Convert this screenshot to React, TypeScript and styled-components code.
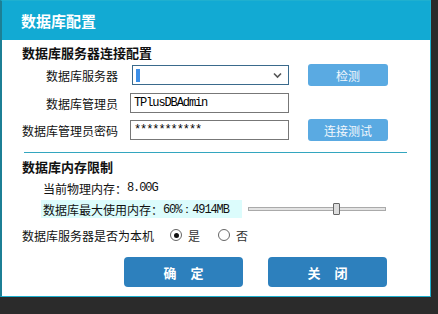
import React, { useState } from "react";
import styled, { createGlobalStyle } from "styled-components";

const GlobalStyle = createGlobalStyle`
  html, body {
    margin: 0;
    padding: 0;
    background: #2b2b2b;
  }
  body {
    font-family: "Noto Sans CJK SC", "Noto Sans", sans-serif;
  }
`;

const cn = `"Noto Sans CJK SC", "Noto Sans", sans-serif`;
const mono = `"Liberation Mono", "DejaVu Sans Mono", monospace`;

const Dialog = styled.div`
  width: 431px;
  height: 297px;
  box-sizing: border-box;
  background: #fff;
  border: 1px solid #1fb0cf;
  border-left: 2px solid #1c7f95;
  display: flex;
  flex-direction: column;
`;

const TitleBar = styled.div`
  height: 39px;
  background: #12aad3;
  color: #fff;
  font-family: ${cn};
  font-size: 15px;
  font-weight: 700;
  display: flex;
  align-items: center;
  padding-left: 19px;
  flex-shrink: 0;
`;

const Body = styled.div`
  padding: 3px 0 0 20px;
  display: flex;
  flex-direction: column;
`;

const SectionTitle = styled.div<{ $mt?: number }>`
  font-family: ${cn};
  font-size: 13px;
  font-weight: 700;
  color: #111;
  height: 20px;
  line-height: 20px;
  margin-top: ${(p) => p.$mt ?? 0}px;
`;

const FormRow = styled.div<{ $mt?: number }>`
  display: flex;
  align-items: center;
  height: 22px;
  margin-top: ${(p) => p.$mt ?? 0}px;
`;

const Label = styled.div`
  width: 96px;
  text-align: right;
  font-family: ${cn};
  font-size: 12px;
  color: #111;
  white-space: nowrap;
`;

const Field = styled.div<{ $ml?: number; $w?: number }>`
  margin-left: ${(p) => p.$ml ?? 12}px;
  width: ${(p) => p.$w ?? 159}px;
  height: 20px;
  box-sizing: border-box;
  border: 1px solid #777;
  display: flex;
  align-items: center;
  padding-left: 3px;
  font-family: ${mono};
  font-size: 12px;
  letter-spacing: -1.1px;
  color: #000;
`;

const SelectBox = styled(Field)`
  border-color: #3a6a8c;
  justify-content: space-between;
  padding-right: 6px;
`;

const Caret = styled.span`
  width: 4px;
  height: 13px;
  background: #3b8fe8;
`;

const SmallButton = styled.div`
  margin-left: 19px;
  width: 80px;
  height: 22px;
  border-radius: 3px;
  background: #5aaae2;
  color: #f2f8fd;
  font-family: ${cn};
  font-size: 12px;
  display: flex;
  align-items: center;
  justify-content: center;
`;

const Divider = styled.div`
  margin: 11px 0 0 2px;
  width: 383px;
  height: 1px;
  background: #33a6bf;
`;

const InfoLine = styled.div<{ $hl?: boolean; $mt: number }>`
  display: flex;
  align-items: center;
  height: 18px;
  margin-top: ${(p) => p.$mt}px;
  margin-left: ${(p) => (p.$hl ? 19 : 21)}px;
  font-family: ${cn};
  font-size: 12px;
  color: #111;
`;

const Highlight = styled.span`
  background: #dcfcfc;
  height: 18px;
  display: flex;
  align-items: center;
  padding: 0 13px 0 2px;
  white-space: nowrap;
`;

const Mono = styled.span`
  font-family: ${mono};
  font-size: 12px;
  letter-spacing: -1.1px;
`;

const Track = styled.div`
  position: relative;
  margin-left: 6px;
  width: 138px;
  height: 4px;
  box-sizing: border-box;
  border: 1px solid #aaa;
  background: #e3e3e3;
`;

const Thumb = styled.div`
  position: absolute;
  top: -5px;
  width: 5px;
  height: 10px;
  border: 1px solid #666;
  background: #ddd;
  border-radius: 1px;
`;

const RadioRow = styled.div`
  display: flex;
  align-items: center;
  height: 22px;
  margin-top: 6px;
  font-family: ${cn};
  font-size: 12px;
  color: #111;
`;

const Radio = styled.span<{ $ml: number; $on?: boolean }>`
  margin-left: ${(p) => p.$ml}px;
  width: 10px;
  height: 10px;
  border-radius: 50%;
  border: 1px solid #666;
  display: inline-flex;
  align-items: center;
  justify-content: center;
  &::after {
    content: "";
    display: ${(p) => (p.$on ? "block" : "none")};
    width: 5px;
    height: 5px;
    border-radius: 50%;
    background: #111;
  }
`;

const RadioText = styled.span`
  margin-left: 6px;
  color: #333;
`;

const ButtonBar = styled.div`
  display: flex;
  gap: 25px;
  margin: 11px 0 0 102px;
`;

const BigButton = styled.div`
  width: 119px;
  height: 30px;
  border-radius: 4px;
  background: #2d80bd;
  color: #fff;
  font-family: ${cn};
  font-size: 13px;
  font-weight: 700;
  letter-spacing: 14px;
  text-indent: 14px;
  display: flex;
  align-items: center;
  justify-content: center;
`;

export default function App() {
  const [pct] = useState(60);
  const thumbLeft = Math.round((pct / 100) * 138) + 1;
  return (
    <>
      <GlobalStyle />
      <Dialog>
        <TitleBar>数据库配置</TitleBar>
        <Body>
          <SectionTitle>数据库服务器连接配置</SectionTitle>
          <FormRow $mt={1}>
            <Label>数据库服务器</Label>
            <SelectBox $ml={14} $w={157}>
              <Caret />
              <svg width="9" height="7" viewBox="0 0 9 7">
                <path d="M1 1.5 L4.5 5 L8 1.5" stroke="#555" strokeWidth="1.6" fill="none" />
              </svg>
            </SelectBox>
            <SmallButton>检测</SmallButton>
          </FormRow>
          <FormRow $mt={6}>
            <Label>数据库管理员</Label>
            <Field>TPlusDBAdmin</Field>
          </FormRow>
          <FormRow $mt={5}>
            <Label>数据库管理员密码</Label>
            <Field>***********</Field>
            <SmallButton>连接测试</SmallButton>
          </FormRow>
          <Divider />
          <SectionTitle $mt={4}>数据库内存限制</SectionTitle>
          <InfoLine $mt={2}>
            当前物理内存：<Mono>8.00G</Mono>
          </InfoLine>
          <InfoLine $hl $mt={3}>
            <Highlight>
              数据库最大使用内存：<Mono>60%：4914MB</Mono>
            </Highlight>
            <Track>
              <Thumb style={{ left: thumbLeft }} />
            </Track>
          </InfoLine>
          <RadioRow>
            数据库服务器是否为本机
            <Radio $ml={16} $on />
            <RadioText>是</RadioText>
            <Radio $ml={18} />
            <RadioText>否</RadioText>
          </RadioRow>
          <ButtonBar>
            <BigButton>确定</BigButton>
            <BigButton>关闭</BigButton>
          </ButtonBar>
        </Body>
      </Dialog>
    </>
  );
}
